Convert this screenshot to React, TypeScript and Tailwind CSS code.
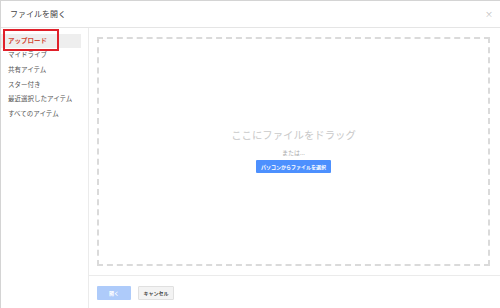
import React from 'react';

const items = ['マイドライブ', '共有アイテム', 'スター付き', '最近選択したアイテム', 'すべてのアイテム'];

const App = () => {
	return (
		<div
			className="w-[500px] h-[308px] bg-white border-l border-t border-[#d4d4d4] flex flex-col overflow-hidden"
			style={{ fontFamily: '"Noto Sans CJK JP", "Noto Sans", sans-serif' }}
		>
			<header className="h-[27px] shrink-0 flex items-center justify-between pl-[9px] pr-[7px] border-b border-[#e5e5e5]">
				<span className="text-[8px] leading-none text-[#444]">ファイルを開く</span>
				<span className="text-[8px] leading-none text-[#bbb]">×</span>
			</header>
			<div className="flex flex-1 min-h-0">
				<aside className="w-[88px] shrink-0 border-r border-[#ebebeb] pt-[6px]">
					<div className="relative">
						<div className="absolute left-[2px] top-[-5px] w-[56px] h-[22px] border-2 border-[#e0202a]" />
						<div className="w-[80px] h-[14px] bg-[#eeeeee] flex items-center pl-[7px] text-[6.5px] font-bold text-[#d14836]">
							アップロード
						</div>
					</div>
					<ul className="mt-[0px]">
						{items.map((t) => (
							<li key={t} className="h-[14.6px] flex items-center pl-[7px] text-[6.5px] text-[#555]">
								{t}
							</li>
						))}
					</ul>
				</aside>
				<main className="flex-1 flex flex-col">
					<div className="flex-1 pt-[9px] pb-[9px] pl-[8px] pr-[10px] flex">
						<div className="flex-1 border-2 border-dashed border-[#dadada] flex flex-col items-center justify-center">
							<div className="text-[10.4px] leading-none text-[#c9c9c9]">ここにファイルをドラッグ</div>
							<div className="mt-[10px] text-[6px] leading-none text-[#aaa]">または...</div>
							<button className="mt-[4px] w-[75px] h-[13px] bg-[#4d90fe] rounded-[1px] text-white text-[5px] font-bold flex items-center justify-center">
								パソコンからファイルを選択
							</button>
						</div>
					</div>
					<footer className="h-[33px] shrink-0 border-t border-[#ebebeb] flex items-center gap-[7px] pl-[8px] pt-[1px]">
						<button className="w-[34px] h-[14px] bg-[#aecbfa] rounded-[1px] text-white text-[5px] font-bold flex items-center justify-center">
							開く
						</button>
						<button className="w-[36px] h-[14px] bg-[#f3f3f3] border border-[#e0e0e0] rounded-[1px] text-[#444] text-[5px] font-bold flex items-center justify-center">
							キャンセル
						</button>
					</footer>
				</main>
			</div>
		</div>
	);
};

export default App;
